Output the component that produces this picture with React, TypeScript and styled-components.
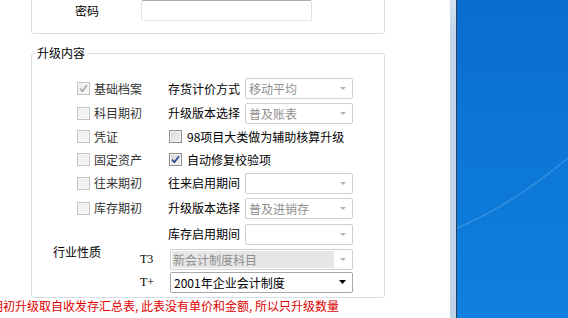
import React from 'react';
import styled, { createGlobalStyle } from 'styled-components';

const Global = createGlobalStyle`
  html, body { margin: 0; padding: 0; width: 568px; height: 318px; overflow: hidden; background: #0b74d5; }
  #root { width: 568px; height: 318px; }
`;

const Screen = styled.div`
  display: flex;
  width: 568px;
  height: 318px;
  overflow: hidden;
  font-family: "Noto Sans CJK SC", "Microsoft YaHei", sans-serif;
  font-size: 12px;
  color: #000;
`;

const Window = styled.div`
  width: 450px;
  height: 318px;
  flex: none;
  background: #fff;
  overflow: hidden;
  display: flex;
  flex-direction: column;
  align-items: flex-start;
`;

const Frame = styled.div`
  width: 6px;
  flex: none;
  background: linear-gradient(180deg, #d6e3ef 0px, #c3d6e9 28px, #bfd3e7 100%);
  border-right: 1px solid #27425f;
`;

const Desktop = styled.div`
  flex: 1;
  position: relative;
  background: linear-gradient(180deg, #0a6dcd 0%, #0c78d8 55%, #0f80df 100%);
`;

const Streak = styled.svg`
  position: absolute;
  inset: 0;
`;

const TopGroup = styled.div`
  margin: -20px 0 0 31px;
  width: 354px;
  height: 54px;
  box-sizing: border-box;
  border: 1px solid #d5dfe5;
  border-radius: 3px;
  display: flex;
  align-items: flex-end;
  padding: 0 0 12px 43px;
`;

const PwdRow = styled.div`
  display: flex;
  align-items: center;
  gap: 42px;
`;

const Label = styled.span<{ $col?: string; $ml?: number }>`
  white-space: nowrap;
  line-height: 16px;
  color: #000;
  grid-column: ${(p) => p.$col || 'auto'};
  margin-left: ${(p) => p.$ml || 0}px;
`;

const TextInput = styled.div`
  width: 171px;
  height: 21px;
  box-sizing: border-box;
  border: 1px solid;
  border-color: #abadb3 #dbdfe6 #e3e9ef #e2e3ea;
  border-radius: 2px;
  background: #fff;
`;

const Group = styled.fieldset`
  margin: 11px 0 0 31px;
  width: 354px;
  box-sizing: border-box;
  padding: 0;
  min-width: 0;
  border: 1px solid #d5dfe5;
  border-radius: 3px;
`;

const Legend = styled.legend`
  margin-left: 3px;
  padding: 0 2px;
  font-size: 12px;
  line-height: 16px;
  color: #000;
`;

const Grid = styled.div`
  display: grid;
  padding: 15px 0 4px 21px;
  grid-template-columns: 24px 60px 31px 77px 108px;
  grid-template-rows: 25px 24px 23px 23px 24px 26px 26px 24px 22px;
  align-items: center;
`;

const CheckRow = styled.label<{ $col: string; $ml?: number; $gap: number; $dim?: boolean }>`
  grid-column: ${(p) => p.$col};
  display: flex;
  align-items: center;
  gap: ${(p) => p.$gap}px;
  margin-left: ${(p) => p.$ml || 0}px;
  white-space: nowrap;
  line-height: 16px;
  color: ${(p) => (p.$dim ? '#333' : '#000')};
`;

const Box = styled.span<{ $disabled?: boolean }>`
  width: 13px;
  height: 13px;
  box-sizing: border-box;
  flex: none;
  display: flex;
  align-items: center;
  justify-content: center;
  border: 1px solid ${(p) => (p.$disabled ? '#c2c2c2' : '#8e8f8f')};
  box-shadow: inset 0 0 0 1px ${(p) => (p.$disabled ? '#f7f7f7' : '#f4f4f4')};
  background: ${(p) =>
    p.$disabled
      ? 'linear-gradient(135deg, #ececec, #f6f6f6)'
      : 'linear-gradient(135deg, #d6d6d6, #f3f3f3)'};
`;

const Check = ({ checked, disabled }: { checked?: boolean; disabled?: boolean }) => (
  <Box $disabled={disabled}>
    {checked && (
      <svg width="9" height="9" viewBox="0 0 9 9">
        <path
          d="M1 4.6 L3.4 7.2 L8 1.2"
          fill="none"
          stroke={disabled ? '#a9a9a9' : '#24498f'}
          strokeWidth="1.7"
        />
      </svg>
    )}
  </Box>
);

const ComboBox = styled.div<{ $col: string; $ml?: number; $enabled?: boolean }>`
  grid-column: ${(p) => p.$col};
  margin-left: ${(p) => p.$ml || 0}px;
  height: 21px;
  box-sizing: border-box;
  border: 1px solid ${(p) => (p.$enabled ? '#a8a8a8' : '#cfcfcf')};
  border-radius: 2px;
  background: #fff;
  display: flex;
  align-items: stretch;
  padding: 1px;
  color: ${(p) => (p.$enabled ? '#000' : '#8f8f8f')};
`;

const ComboText = styled.span<{ $filled?: boolean }>`
  flex: 1;
  display: flex;
  align-items: center;
  padding-left: ${(p) => (p.$filled ? 1 : 2)}px;
  background: ${(p) => (p.$filled ? '#e6e6e6' : 'transparent')};
  white-space: nowrap;
  overflow: hidden;
`;

const Arrow = styled.span`
  width: 17px;
  flex: none;
  display: flex;
  align-items: center;
  justify-content: center;
`;

const Combo = ({
  col,
  ml,
  text,
  enabled,
  filled,
}: {
  col: string;
  ml?: number;
  text?: string;
  enabled?: boolean;
  filled?: boolean;
}) => (
  <ComboBox $col={col} $ml={ml} $enabled={enabled}>
    <ComboText $filled={filled}>{text}</ComboText>
    <Arrow>
      {enabled ? (
        <svg width="7" height="4" viewBox="0 0 7 4">
          <path d="M0 0 H7 L3.5 4 Z" fill="#000" />
        </svg>
      ) : (
        <svg width="6" height="3" viewBox="0 0 6 3">
          <path d="M0 0 H6 L3 3 Z" fill="#b4b4b4" />
        </svg>
      )}
    </Arrow>
  </ComboBox>
);

const SerifTag = styled.span`
  grid-column: 3;
  margin-left: 3px;
  font-family: "Liberation Serif", serif;
  font-size: 12px;
  line-height: 14px;
`;

const Industry = styled.span`
  grid-column: 1 / 3;
  grid-row: 8;
  align-self: start;
  margin-top: -3px;
  line-height: 16px;
  white-space: nowrap;
`;

const Note = styled.div`
  margin-left: -9px;
  line-height: 15px;
  color: #e00000;
  white-space: nowrap;
`;

export default function App() {
  return (
    <>
      <Global />
      <Screen>
        <Window>
          <TopGroup>
            <PwdRow>
              <Label>密码</Label>
              <TextInput />
            </PwdRow>
          </TopGroup>
          <Group>
            <Legend>升级内容</Legend>
            <Grid>
              <CheckRow $col="2 / 4" $gap={4} $dim>
                <Check checked disabled />
                基础档案
              </CheckRow>
              <Label $col="4">存货计价方式</Label>
              <Combo col="5" text="移动平均" />

              <CheckRow $col="2 / 4" $gap={4} $dim>
                <Check disabled />
                科目期初
              </CheckRow>
              <Label $col="4">升级版本选择</Label>
              <Combo col="5" text="普及账表" />

              <CheckRow $col="2 / 4" $gap={4} $dim>
                <Check disabled />
                凭证
              </CheckRow>
              <CheckRow $col="4 / 6" $gap={5} $ml={1}>
                <Check />
                98项目大类做为辅助核算升级
              </CheckRow>

              <CheckRow $col="2 / 4" $gap={4} $dim>
                <Check disabled />
                固定资产
              </CheckRow>
              <CheckRow $col="4 / 6" $gap={5} $ml={1}>
                <Check checked />
                自动修复校验项
              </CheckRow>

              <CheckRow $col="2 / 4" $gap={4} $dim>
                <Check disabled />
                往来期初
              </CheckRow>
              <Label $col="4">往来启用期间</Label>
              <Combo col="5" />

              <CheckRow $col="2 / 4" $gap={4} $dim>
                <Check disabled />
                库存期初
              </CheckRow>
              <Label $col="4">升级版本选择</Label>
              <Combo col="5" text="普及进销存" />

              <Label $col="4">库存启用期间</Label>
              <Combo col="5" />

              <Industry>行业性质</Industry>
              <SerifTag>T3</SerifTag>
              <Combo col="4 / 6" ml={2} text="新会计制度科目" filled />

              <SerifTag>T+</SerifTag>
              <Combo col="4 / 6" ml={2} text="2001年企业会计制度" enabled />
            </Grid>
          </Group>
          <Note>期初升级取自收发存汇总表, 此表没有单价和金额, 所以只升级数量</Note>
        </Window>
        <Frame />
        <Desktop>
          <Streak width="111" height="318" viewBox="0 0 111 318">
            <path d="M0 228 Q 55 205 111 158" fill="none" stroke="rgba(255,255,255,0.16)" strokeWidth="1.5" />
          </Streak>
        </Desktop>
      </Screen>
    </>
  );
}
